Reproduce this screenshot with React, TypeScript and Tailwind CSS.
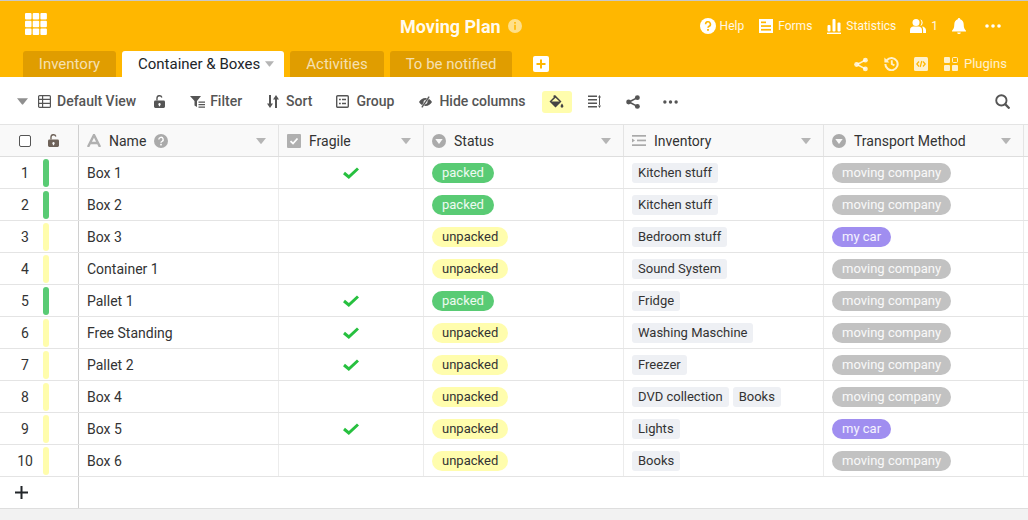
import type { ReactNode } from 'react';

type Tone = 'packed' | 'unpacked';
type Transport = 'moving company' | 'my car';

interface Row {
  name: string;
  fragile: boolean;
  status: Tone;
  inventory: string[];
  transport: Transport;
}

const rows: Row[] = [
  { name: 'Box 1', fragile: true, status: 'packed', inventory: ['Kitchen stuff'], transport: 'moving company' },
  { name: 'Box 2', fragile: false, status: 'packed', inventory: ['Kitchen stuff'], transport: 'moving company' },
  { name: 'Box 3', fragile: false, status: 'unpacked', inventory: ['Bedroom stuff'], transport: 'my car' },
  { name: 'Container 1', fragile: false, status: 'unpacked', inventory: ['Sound System'], transport: 'moving company' },
  { name: 'Pallet 1', fragile: true, status: 'packed', inventory: ['Fridge'], transport: 'moving company' },
  { name: 'Free Standing', fragile: true, status: 'unpacked', inventory: ['Washing Maschine'], transport: 'moving company' },
  { name: 'Pallet 2', fragile: true, status: 'unpacked', inventory: ['Freezer'], transport: 'moving company' },
  { name: 'Box 4', fragile: false, status: 'unpacked', inventory: ['DVD collection', 'Books'], transport: 'moving company' },
  { name: 'Box 5', fragile: true, status: 'unpacked', inventory: ['Lights'], transport: 'my car' },
  { name: 'Box 6', fragile: false, status: 'unpacked', inventory: ['Books'], transport: 'moving company' },
];

const Caret = ({ className = '' }: { className?: string }) => (
  <svg viewBox="0 0 10 6" className={className} fill="currentColor">
    <path d="M0 0h10L5.600 5.600a.8.8 0 0 1-1.200 0z" />
  </svg>
);

const ShareIcon = ({ className = '' }: { className?: string }) => (
  <svg viewBox="0 0 16 16" className={className} fill="currentColor">
    <circle cx="3" cy="8" r="2.800" />
    <circle cx="13" cy="3" r="2.800" />
    <circle cx="13" cy="13" r="2.800" />
    <path d="M3 7.200 12.600 2.400l.8 1.300L4 8.800zM3 8.800l9.600 4.800.8-1.300L4 7.200z" />
  </svg>
);

const Dots = ({ className = '' }: { className?: string }) => (
  <svg viewBox="0 0 16 4" className={className} fill="currentColor">
    <circle cx="2" cy="2" r="1.800" />
    <circle cx="8" cy="2" r="1.800" />
    <circle cx="14" cy="2" r="1.800" />
  </svg>
);

const LockIcon = ({ className = '' }: { className?: string }) => (
  <svg viewBox="0 0 12 14" className={className} fill="currentColor">
    <path d="M1.500 6h9A1.500 1.500 0 0 1 12 7.500v5A1.500 1.500 0 0 1 10.500 14h-9A1.500 1.500 0 0 1 0 12.500v-5A1.500 1.500 0 0 1 1.500 6zM6 8.700a1.300 1.300 0 0 0-.7 2.400V12.300h1.400V11.100A1.300 1.300 0 0 0 6 8.700z" fillRule="evenodd" />
    <path d="M2.500 6V3.500a3.500 3.500 0 0 1 6.800-1.200L7.900 2.900A2 2 0 0 0 4 3.500V6z" />
  </svg>
);

const SelectIcon = () => (
  <svg viewBox="0 0 14 14" className="w-[14px] h-[14px] shrink-0 text-[#aaaaaa]" fill="currentColor">
    <circle cx="7" cy="7" r="7" />
    <path d="M3.300 5h7.400L7 10z" fill="#f9f9f9" />
  </svg>
);

function TopLink({ icon, label, className = '' }: { icon: ReactNode; label: string; className?: string }) {
  return (
    <span className={`flex items-center text-[12px] text-white/90 ${className}`}>
      {icon}
      {label}
    </span>
  );
}

function ToolButton({ icon, label, className = '' }: { icon: ReactNode; label: string; className?: string }) {
  return (
    <span className={`flex items-center text-[14px] font-medium text-[#555555] ${className}`}>
      {icon}
      {label}
    </span>
  );
}

function Tab({ label, className }: { label: string; className: string }) {
  return (
    <div className={`h-[26px] rounded-t-[3px] bg-[#e09d00] text-[15px] text-white/70 flex items-center justify-center ${className}`}>
      {label}
    </div>
  );
}

function HeadCell({ icon, label, extra, width }: { icon: ReactNode; label: string; extra?: ReactNode; width: string }) {
  return (
    <div className={`${width} shrink-0 h-full flex items-center pl-[8px] pr-[12px] border-r border-[#e4e4e4]`}>
      {icon}
      <span className="ml-[8px] pt-[2px] text-[14px] font-normal text-[#333333]">{label}</span>
      {extra}
      <Caret className="ml-auto w-[10px] h-[6px] text-[#b5b5b5]" />
    </div>
  );
}

function Pill({ children, className }: { children: ReactNode; className: string }) {
  return <span className={`h-[20px] rounded-[10px] px-[10px] flex items-center text-[13px] ${className}`}>{children}</span>;
}

export default function App() {
  return (
    <div className="w-[1028px] h-[520px] overflow-hidden bg-[#f2f2f2] flex flex-col font-['Roboto',sans-serif] border-t border-[#c8c8c8]">
      {/* Top bar */}
      <header className="h-[76px] shrink-0 bg-[#ffb700] flex flex-col">
        <div className="h-[50px] flex items-center">
          <svg viewBox="0 0 22 22" className="ml-[25px] w-[22px] h-[22px] text-white -mt-[5px]" fill="currentColor">
            <rect x="0" y="0" width="6.500" height="6.500" rx="1" />
            <rect x="7.700" y="0" width="6.500" height="6.500" rx="1" />
            <rect x="15.400" y="0" width="6.500" height="6.500" rx="1" />
            <rect x="0" y="7.700" width="6.500" height="6.500" rx="1" />
            <rect x="7.700" y="7.700" width="6.500" height="6.500" rx="1" />
            <rect x="15.400" y="7.700" width="6.500" height="6.500" rx="1" />
            <rect x="0" y="15.400" width="6.500" height="6.500" rx="1" />
            <rect x="7.700" y="15.400" width="6.500" height="6.500" rx="1" />
            <rect x="15.400" y="15.400" width="6.500" height="6.500" rx="1" />
          </svg>
          <span className="ml-[353px] mt-[2px] text-[18px] font-bold text-white/95 leading-none">Moving Plan</span>
          <svg viewBox="0 0 14 14" className="ml-[7px] w-[14px] h-[14px]">
            <circle cx="7" cy="7" r="7" fill="#ffe08a" />
            <rect x="6.200" y="3" width="1.600" height="1.700" fill="#ffb700" />
            <rect x="6.200" y="5.800" width="1.600" height="5" fill="#ffb700" />
          </svg>
          <div className="ml-[178px] flex items-center">
            <TopLink
              className="gap-[4px]"
              label="Help"
              icon={
                <svg viewBox="0 0 16 16" className="w-[16px] h-[16px]">
                  <circle cx="8" cy="8" r="8" fill="white" />
                  <path d="M5.600 6.200a2.400 2.400 0 1 1 3.500 2.100c-.7.400-1.100.8-1.100 1.500" fill="none" stroke="#ffb700" strokeWidth="1.600" />
                  <rect x="7.100" y="11" width="1.800" height="1.800" fill="#ffb700" />
                </svg>
              }
            />
            <TopLink
              className="ml-[15px] gap-[5px]"
              label="Forms"
              icon={
                <svg viewBox="0 0 14 14" className="w-[14px] h-[14px]">
                  <rect width="14" height="14" fill="white" />
                  <rect x="2" y="2.500" width="5" height="1.700" fill="#ffb700" />
                  <rect x="2" y="6.200" width="10" height="1.700" fill="#ffb700" />
                  <rect x="2" y="9.900" width="10" height="1.700" fill="#ffb700" />
                </svg>
              }
            />
            <TopLink
              className="ml-[15px] gap-[5px]"
              label="Statistics"
              icon={
                <svg viewBox="0 0 14 16" className="w-[14px] h-[16px]" fill="white">
                  <rect x="0.500" y="7" width="3" height="6.500" rx="1" />
                  <rect x="5.500" y="1" width="3" height="12.500" rx="1" />
                  <rect x="10.500" y="4.500" width="3" height="9" rx="1" />
                  <rect x="0" y="14.600" width="14" height="1.400" />
                </svg>
              }
            />
            <TopLink
              className="ml-[14px] gap-[5px]"
              label="1"
              icon={
                <svg viewBox="0 0 16 14" className="w-[16px] h-[14px]" fill="white">
                  <circle cx="6" cy="3.600" r="3.500" />
                  <path d="M0 14v-2.800C0 9 1.600 7.600 3.400 7.600h5.200c1.800 0 3.400 1.400 3.400 3.600V14z" />
                  <path d="M10.200 .3a3.500 3.500 0 0 1 0 6.700 5.300 5.300 0 0 0 0-6.700zM12 7.600c2.300.2 4 1.600 4 3.600V14h-2.900v-2.800c0-1.500-.4-2.600-1.100-3.600z" />
                </svg>
              }
            />
            <svg viewBox="0 0 14 16" className="ml-[14px] w-[14px] h-[16px]" fill="white">
              <path d="M7 0a1.200 1.200 0 0 1 1.200 1.300C10.500 1.900 11.700 4 11.700 6.500c0 3.200.8 4.800 2.300 6.200V13.600H0v-.9c1.500-1.400 2.300-3 2.300-6.200 0-2.500 1.200-4.600 3.500-5.200A1.200 1.200 0 0 1 7 0z" />
              <path d="M5.200 14.500h3.600a1.800 1.500 0 0 1-3.600 0z" />
            </svg>
            <Dots className="ml-[19px] w-[16px] h-[4px] text-white" />
          </div>
        </div>
        <div className="h-[26px] flex items-end">
          <Tab label="Inventory" className="ml-[23px] w-[93px]" />
          <div className="ml-[6px] w-[162px] h-[26px] rounded-t-[3px] bg-white flex items-center pl-[16px] text-[15px] text-[#212529]">
            Container &amp; Boxes
            <Caret className="ml-[5px] w-[9px] h-[6px] text-[#b5b5b5]" />
          </div>
          <Tab label="Activities" className="ml-[6px] w-[94px]" />
          <Tab label="To be notified" className="ml-[6px] w-[122px]" />
          <svg viewBox="0 0 16 16" className="ml-[21px] mb-[5px] w-[16px] h-[16px]">
            <rect width="16" height="16" rx="2" fill="white" />
            <path d="M7 3.500h2V7h3.500v2H9v3.500H7V9H3.500V7H7z" fill="#ffb700" />
          </svg>
          <div className="ml-[305px] mb-[5px] h-[16px] flex items-center text-white/80">
            <ShareIcon className="w-[14px] h-[15px]" />
            <svg viewBox="0 0 16 16" className="ml-[16px] w-[15px] h-[15px] -mt-[1px]" fill="none" stroke="currentColor" strokeWidth="2.200">
              <path d="M3 4.500A6.500 6.500 0 1 1 1.500 8.500" />
              <path d="M.4 1.500v5.300h5.300z" fill="currentColor" stroke="none" />
              <path d="M8.300 4.500V8.500l2.800 1.500" strokeWidth="2" />
            </svg>
            <svg viewBox="0 0 14 14" className="ml-[15px] w-[14px] h-[14px]">
              <rect width="14" height="14" rx="1.500" fill="currentColor" />
              <path d="M5 4.500 2.800 7 5 9.500M9 4.500 11.200 7 9 9.500M7.800 4 6.200 10" fill="none" stroke="#ffb700" strokeWidth="1.200" />
            </svg>
            <svg viewBox="0 0 14 14" className="ml-[16px] w-[14px] h-[14px]" fill="currentColor">
              <rect width="6" height="6" rx="1" />
              <rect x="8.500" y="0.500" width="5" height="5" rx="1" fill="none" stroke="currentColor" />
              <rect y="8" width="6" height="6" rx="1" />
              <rect x="8" y="8" width="6" height="6" rx="1" />
            </svg>
            <span className="ml-[6px] text-[13px]">Plugins</span>
          </div>
        </div>
      </header>

      {/* View toolbar */}
      <div className="h-[48px] shrink-0 bg-white flex items-center pt-[2px] border-b border-[#e4e4e4]">
        <Caret className="ml-[17px] w-[11px] h-[7px] text-[#8f8f8f]" />
        <ToolButton
          className="ml-[10px] gap-[6px]"
          label="Default View"
          icon={
            <svg viewBox="0 0 13 13" className="w-[13px] h-[13px]" fill="none" stroke="currentColor" strokeWidth="1.200">
              <rect x=".6" y=".6" width="11.800" height="11.800" rx="1" />
              <path d="M.6 4.400h11.800M.6 8.400h11.800M4.600 .6v11.800" />
            </svg>
          }
        />
        <LockIcon className="ml-[18px] w-[11px] h-[13px] text-[#555555]" />
        <ToolButton
          className="ml-[25px] gap-[5px]"
          label="Filter"
          icon={
            <svg viewBox="0 0 15 12" className="w-[15px] h-[12px]" fill="currentColor">
              <path d="M0 0h11L7 5v6L4.500 9.500V5zM8.500 5.500H15v1.300H8.500zM8.500 8H15v1.300H8.500zM8.500 10.500H15v1.300H8.500z" />
            </svg>
          }
        />
        <ToolButton
          className="ml-[25px] gap-[7px]"
          label="Sort"
          icon={
            <svg viewBox="0 0 12 13" className="w-[12px] h-[13px]" fill="currentColor">
              <path d="M2 0h2v8.500h2L3 13 0 8.500h2zM8 13h2V4.500h2L9 0 6 4.500h2z" />
            </svg>
          }
        />
        <ToolButton
          className="ml-[24px] gap-[7px]"
          label="Group"
          icon={
            <svg viewBox="0 0 13 13" className="w-[13px] h-[13px]" fill="none" stroke="currentColor" strokeWidth="1.400">
              <rect x=".7" y=".7" width="11.600" height="11.600" rx="1" />
              <path d="M3 4.500h1.800M6 4.500h4M3 8.500h1.800M6 8.500h4" />
            </svg>
          }
        />
        <ToolButton
          className="ml-[25px] gap-[7px]"
          label="Hide columns"
          icon={
            <svg viewBox="0 0 13 12" className="w-[13px] h-[12px]" fill="currentColor">
              <path d="M6.500 2C9.500 2 11.800 4 13 6c-1.200 2-3.500 4-6.500 4S1.200 8 0 6c1.200-2 3.500-4 6.500-4zm0 2a2 2 0 1 0 0 4 2 2 0 0 0 0-4z" fillRule="evenodd" />
              <path d="M9.500 0 11 1 3.500 12 2 11z" stroke="white" strokeWidth=".5" />
            </svg>
          }
        />
        <div className="ml-[16px] w-[30px] h-[22px] rounded-[3px] bg-[#fffdad] flex items-center justify-center">
          <svg viewBox="0 0 15 14" className="w-[15px] h-[14px]" fill="#444444">
            <path d="M6 0 7 1 12.500 6.500 6.500 12.500.5 6.500 5 2 4 1z" />
            <path d="M2.500 6.500h8L6.500 2.800z" fill="#fffdad" />
            <path d="M13 8.500c.8 1.200 1.400 2 1.400 2.800a1.400 1.400 0 0 1-2.800 0c0-.8.600-1.600 1.400-2.800z" />
          </svg>
        </div>
        <svg viewBox="0 0 13 13" className="ml-[16px] w-[13px] h-[13px]" fill="#555555">
          <rect y="0.500" width="9" height="1.500" />
          <rect y="4" width="9" height="1.500" />
          <rect y="7.500" width="9" height="1.500" />
          <rect y="11" width="9" height="1.500" />
          <path d="M11 2h1v9h-1zM11.500 0 13 2.500h-3zM11.500 13 13 10.500h-3z" />
        </svg>
        <ShareIcon className="ml-[25px] w-[14px] h-[14px] text-[#555555]" />
        <Dots className="ml-[23px] w-[15px] h-[4px] text-[#555555]" />
        <svg viewBox="0 0 16 16" className="ml-[317px] w-[15px] h-[15px]" fill="none" stroke="#555555" strokeWidth="2">
          <circle cx="6.800" cy="6.800" r="5.500" />
          <path d="M10.800 10.800 15.500 15.500" strokeWidth="2.400" />
        </svg>
      </div>

      {/* Grid */}
      <div className="h-[32px] shrink-0 bg-[#f9f9f9] flex items-center border-b border-[#dedede]">
        <div className="w-[79px] shrink-0 h-full flex items-center border-r border-[#d0d0d0]">
          <span className="ml-[19px] w-[12px] h-[12px] rounded-[2px] border border-[#555555] bg-white" />
          <LockIcon className="ml-[17px] w-[11px] h-[13px] text-[#6e6259]" />
        </div>
        <HeadCell
          width="w-[200px]"
          label="Name"
          icon={
            <svg viewBox="0 0 14 13" className="w-[14px] h-[13px]" fill="none" stroke="#b0b0b0" strokeWidth="2.400">
              <path d="M1 13 7 1l6 12M3 9h8" />
            </svg>
          }
          extra={
            <svg viewBox="0 0 14 14" className="ml-[8px] w-[14px] h-[14px]">
              <circle cx="7" cy="7" r="7" fill="#aaaaaa" />
              <path d="M4.800 5.500a2.200 2.200 0 1 1 3.200 2c-.7.400-1 .7-1 1.300" fill="none" stroke="white" strokeWidth="1.400" />
              <rect x="6.200" y="9.800" width="1.600" height="1.600" fill="white" />
            </svg>
          }
        />
        <HeadCell
          width="w-[145px]"
          label="Fragile"
          icon={
            <svg viewBox="0 0 14 14" className="w-[14px] h-[14px]">
              <rect width="14" height="14" rx="1" fill="#b0b0b0" />
              <path d="M3.500 7.200 6 9.500 10.500 4.500" fill="none" stroke="white" strokeWidth="1.800" />
            </svg>
          }
        />
        <HeadCell width="w-[200px]" label="Status" icon={<SelectIcon />} />
        <HeadCell
          width="w-[200px]"
          label="Inventory"
          icon={
            <svg viewBox="0 0 14 11" className="w-[14px] h-[11px] shrink-0" fill="#aaaaaa">
              <rect width="14" height="1.700" />
              <rect x="5" y="4.600" width="9" height="1.700" />
              <rect y="9.300" width="14" height="1.700" />
              <path d="M0 3.500 3 5.500 0 7.500z" />
            </svg>
          }
        />
        <HeadCell width="w-[200px]" label="Transport Method" icon={<SelectIcon />} />
      </div>

      <div className="h-[352px] shrink-0 bg-white border-b border-[#dedede] flex flex-col">
        {rows.map((row, i) => (
          <div key={row.name} className="h-[32px] shrink-0 flex border-b border-[#e4e4e4]">
            <div className="w-[79px] shrink-0 flex items-center border-r border-[#d0d0d0]">
              <span className="w-[43px] pl-[16px] pr-[9px] pt-[2px] text-[14px] text-[#333333] whitespace-nowrap flex justify-center">{i + 1}</span>
              <span className={`w-[6px] h-[28px] rounded-[3px] ${row.status === 'packed' ? 'bg-[#59cb74]' : 'bg-[#fffdad]'}`} />
            </div>
            <div className="w-[200px] shrink-0 flex items-center pl-[8px] pt-[2px] text-[14px] text-[#333333] border-r border-[#ececec]">{row.name}</div>
            <div className="w-[145px] shrink-0 flex items-center justify-center border-r border-[#ececec]">
              {row.fragile && (
                <svg viewBox="0 0 16 12" className="w-[16px] h-[12px]" fill="none" stroke="#27c03f" strokeWidth="3">
                  <path d="M1 6 5.800 10 15 1.500" />
                </svg>
              )}
            </div>
            <div className="w-[200px] shrink-0 flex items-center pl-[8px] border-r border-[#ececec]">
              {row.status === 'packed' ? (
                <Pill className="bg-[#59cb74] text-white/90">packed</Pill>
              ) : (
                <Pill className="bg-[#fffdad] text-[#333333]">unpacked</Pill>
              )}
            </div>
            <div className="w-[200px] shrink-0 flex items-center gap-[4px] pl-[8px] border-r border-[#ececec]">
              {row.inventory.map((item) => (
                <span key={item} className="h-[20px] rounded-[3px] bg-[#eef0f4] px-[6px] flex items-center text-[13px] text-[#333333]">
                  {item}
                </span>
              ))}
            </div>
            <div className="w-[200px] shrink-0 flex items-center pl-[8px] border-r border-[#ececec]">
              {row.transport === 'my car' ? (
                <Pill className="bg-[#a08ef0] text-white/90">my car</Pill>
              ) : (
                <Pill className="bg-[#c2c2c2] text-white/90">moving company</Pill>
              )}
            </div>
          </div>
        ))}
        <div className="flex-1 flex">
          <div className="w-[79px] shrink-0 flex items-center border-r border-[#d0d0d0] pl-[15px]">
            <svg viewBox="0 0 13 13" className="w-[13px] h-[13px]" fill="none" stroke="#212529" strokeWidth="2">
              <path d="M6.500 0v13M0 6.500h13" />
            </svg>
          </div>
        </div>
      </div>
    </div>
  );
}
